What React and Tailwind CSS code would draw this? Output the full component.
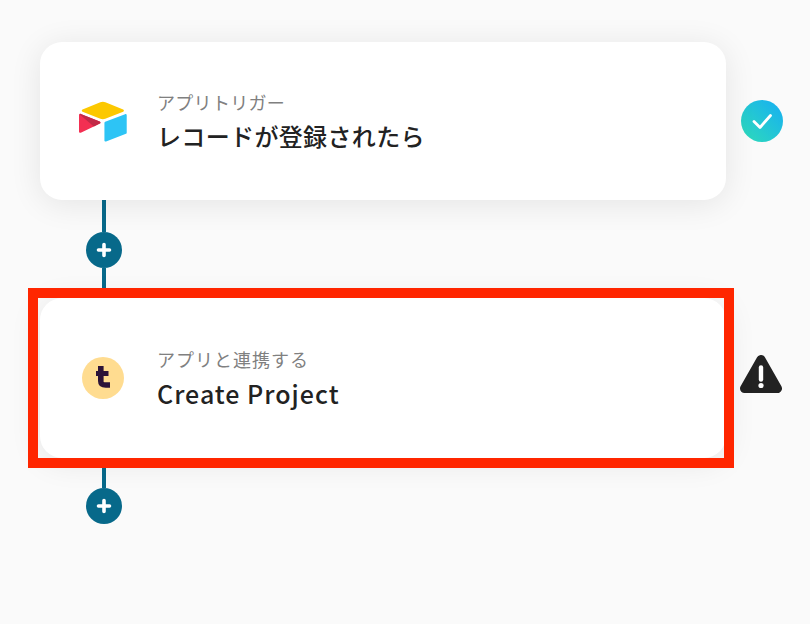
function Airtable() {
  return (
    <svg width="48" height="41" viewBox="11 8 178 152" className="shrink-0">
      <path fill="#fcc800" d="M90.039 12.368 24.079 39.66c-3.667 1.519-3.63 6.729.062 8.192l66.235 26.266a24.58 24.58 0 0 0 18.12 0l66.236-26.266c3.69-1.463 3.729-6.673.062-8.192l-65.96-27.292a24.58 24.58 0 0 0-18.795 0" />
      <path fill="#2dc4f5" d="M105.312 88.46v65.617c0 3.12 3.147 5.258 6.048 4.108l73.806-28.648a4.42 4.42 0 0 0 2.79-4.108V60.811c0-3.12-3.147-5.258-6.048-4.108l-73.806 28.648a4.42 4.42 0 0 0-2.79 4.108" />
      <path fill="#f32f52" d="M88.078 91.846l-21.904 10.576-2.224 1.075-46.238 22.155c-2.93 1.414-6.672-.722-6.672-3.978V60.088c0-1.178.604-2.195 1.414-2.96a5 5 0 0 1 1.12-.84c1.104-.663 2.68-.84 4.02-.31L87.71 83.76c3.564 1.414 3.844 6.408.368 8.087" />
      <path fill="#c12a47" d="M88.078 91.846l-21.904 10.576-53.72-45.295a5 5 0 0 1 1.12-.84c1.104-.663 2.68-.84 4.02-.31L87.71 83.76c3.564 1.414 3.844 6.408.368 8.087" />
    </svg>
  );
}

function Logo() {
  return (
    <svg width="42" height="42" viewBox="0 0 42 42" className="shrink-0">
      <circle cx="21" cy="21" r="21" fill="#ffdc90" />
      <path fill="none" stroke="#2c1338" strokeWidth="5.6" strokeLinejoin="round" d="M18.8 9V24c0 3 1.6 4 5 4H28" />
      <path fill="none" stroke="#2c1338" strokeWidth="5" d="M14 16.5H26.5" />
    </svg>
  );
}

function Check() {
  return (
    <svg width="42" height="42" viewBox="0 0 42 42" className="shrink-0">
      <defs>
        <linearGradient id="checkGrad" x1="0" y1="1" x2="1" y2="0">
          <stop offset="0" stopColor="#2fdcb8" />
          <stop offset="1" stopColor="#16aef4" />
        </linearGradient>
      </defs>
      <circle cx="21" cy="21" r="21" fill="url(#checkGrad)" />
      <path d="M13 21.5 19 27.5 29.5 15.5" fill="none" stroke="#fff" strokeWidth="2.8" strokeLinecap="round" strokeLinejoin="round" />
    </svg>
  );
}

function Warning() {
  return (
    <svg width="42" height="38" viewBox="0 0 42 38" className="shrink-0 -ml-px mb-[8px]">
      <path d="M21 4.5 L37.5 33.5 H4.5 Z" fill="#222" stroke="#222" strokeWidth="9" strokeLinejoin="round" />
      <path d="M21 12.5V24.5" stroke="#fff" strokeWidth="4.4" strokeLinecap="round" />
      <circle cx="21" cy="30.5" r="2.6" fill="#fff" />
    </svg>
  );
}

function Plus() {
  return (
    <div className="w-9 h-9 rounded-full bg-[#07698a] flex items-center justify-center shrink-0">
      <svg width="16" height="16" viewBox="0 0 16 16">
        <path d="M8 2.5V13.5M2.5 8H13.5" stroke="#fff" strokeWidth="3.6" strokeLinecap="round" />
      </svg>
    </div>
  );
}

function Card({ icon, label, title, status, highlight, labelClass, titleClass, heightClass }) {
  return (
    <div className="flex items-center gap-[15px]">
      <div className={"relative w-[686px] bg-white rounded-[22px] shadow-[0_4px_32px_rgba(0,0,0,0.09)] flex items-center shrink-0 " + heightClass}>
        <div className="w-[126px] -mr-[9px] flex justify-center shrink-0">{icon}</div>
        <div className="flex flex-col">
          <div className={"text-[18px] leading-[26px] mt-[1px] text-[#808080] " + labelClass}>{label}</div>
          <div className={"leading-[36px] font-medium text-[#222] " + titleClass}>{title}</div>
        </div>
        {highlight && (
          <div className="absolute left-[-12px] top-[-10px] w-[706px] h-[180px] border-[10px] border-[#ff2600]" />
        )}
      </div>
      {status}
    </div>
  );
}

function Connector({ tail, lineClass }) {
  return (
    <div className="ml-[46px] w-9 flex flex-col items-center">
      <div className={"w-1 bg-[#07698a] " + lineClass} />
      <Plus />
      {tail && <div className="w-1 h-[30px] bg-[#07698a]" />}
    </div>
  );
}

export default function App() {
  return (
    <div
      className="w-[810px] h-[624px] overflow-hidden bg-[#fafafa] pt-[42px] pl-[40px]"
      style={{ fontFamily: '"Noto Sans CJK JP", "Noto Sans", sans-serif' }}
    >
      <Card icon={<Airtable />} label="アプリトリガー" labelClass="tracking-[0.3px]" title="レコードが登録されたら" titleClass="text-[24px] mt-[3px] tracking-[0.35px]" heightClass="h-[158px]" status={<Check />} />
      <Connector tail lineClass="h-[32px]" />
      <Card icon={<Logo />} label="アプリと連携する" labelClass="tracking-[1px]" title="Create Project" titleClass="text-[25px] mt-[3px] tracking-[1px]" heightClass="h-[160px]" status={<Warning />} highlight />
      <Connector lineClass="h-[30px]" />
    </div>
  );
}
